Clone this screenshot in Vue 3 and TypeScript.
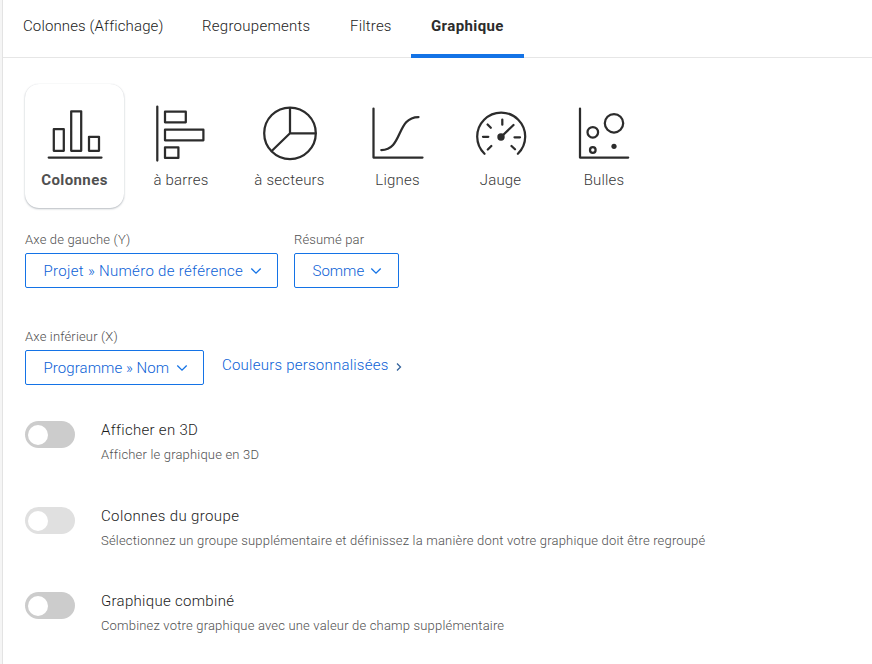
<script setup lang="ts">
import { reactive, ref } from 'vue'

interface Setting { id: string; title: string; text: string; on: boolean; disabled: boolean }

const tabs = ['Colonnes (Affichage)', 'Regroupements', 'Filtres', 'Graphique']
const tabKeys = ['tab-columns', 'tab-groups', 'tab-filters', 'tab-chart']
const activeTab = ref('Graphique')

const charts = [
  { id: 'column', label: 'Colonnes' },
  { id: 'bar', label: 'à barres' },
  { id: 'pie', label: 'à secteurs' },
  { id: 'line', label: 'Lignes' },
  { id: 'gauge', label: 'Jauge' },
  { id: 'bubble', label: 'Bulles' },
]
const activeChart = ref('column')

const settings = reactive<Setting[]>([
  { id: 'three-d', title: 'Afficher en 3D', text: 'Afficher le graphique en 3D', on: false, disabled: false },
  { id: 'grouped', title: 'Colonnes du groupe', text: 'Sélectionnez un groupe supplémentaire et définissez la manière dont votre graphique doit être regroupé', on: false, disabled: true },
  { id: 'combined', title: 'Graphique combiné', text: 'Combinez votre graphique avec une valeur de champ supplémentaire', on: false, disabled: false },
])
</script>

<template>
  <main class="panel">
    <nav class="tabs">
      <button v-for="(tab, i) in tabs" :key="tab" class="tab" :class="[tabKeys[i], { active: tab === activeTab }]" @click="activeTab = tab">{{ tab }}</button>
    </nav>

    <section class="charts">
      <button v-for="c in charts" :key="c.id" class="chart" :class="[c.id, { selected: c.id === activeChart }]" @click="activeChart = c.id">
        <svg class="icon" width="60" height="60" viewBox="0 0 60 60">
          <g v-if="c.id === 'column'">
            <path d="M3.700 54.500H56.500M8.800 26.200h10v21.600h-10zM26.200 8.300h10v39.500h-10zM44 33.800h10v14h-10z" />
          </g>
          <g v-else-if="c.id === 'bar'">
            <path d="M6.300 3.500V57.500M14 8.700h20.800v10.600H14zM14 26.700h38.400v10.600H14zM14 44.300h13.400v10.600H14z" />
          </g>
          <g v-else-if="c.id === 'pie'">
            <circle cx="30" cy="30.300" r="25.800" />
            <path d="M30 5v25.300h25.500M30 30.300L11.700 48" />
          </g>
          <g v-else-if="c.id === 'line'">
            <path d="M5.500 5.500V54.500H54.500M13.300 47C35 47 28 14 50.500 14" />
          </g>
          <g v-else-if="c.id === 'gauge'">
            <path d="M13.500 50.800A24 24 0 1 1 46.900 50.800M31.300 16.500v5.200M16.600 21.500l3.200 3.300M12 33.800h5.300M20.300 43l-3.500 3.500M43.500 34.300h5.500M40.500 43l3.500 3.300M30.500 33.500L42.500 22" />
            <circle class="solid" cx="30" cy="34" r="3.700" />
          </g>
          <g v-else>
            <path d="M6 5.500V54.500H54.200" />
            <circle cx="18.800" cy="29.300" r="5.300" />
            <circle cx="40" cy="20.300" r="9.200" />
            <circle cx="18.800" cy="47" r="2.800" />
            <circle class="solid" cx="40" cy="43.300" r="2.600" />
          </g>
        </svg>
        <span class="chart-label">{{ c.label }}</span>
      </button>
    </section>

    <section class="axis-row">
      <div class="field">
        <label>Axe de gauche (Y)</label>
        <button class="select reference">
          <span>Projet » Numéro de référence</span>
          <svg class="chevron" width="12" height="8" viewBox="0 0 12 8"><path d="M1.300 1.500L6 6.200l4.700-4.700" /></svg>
        </button>
      </div>
      <div class="field">
        <label>Résumé par</label>
        <button class="select sum">
          <span>Somme</span>
          <svg class="chevron" width="12" height="8" viewBox="0 0 12 8"><path d="M1.300 1.500L6 6.200l4.700-4.700" /></svg>
        </button>
      </div>
    </section>

    <section class="axis-row bottom-axis">
      <div class="field">
        <label>Axe inférieur (X)</label>
        <button class="select program">
          <span>Programme » Nom</span>
          <svg class="chevron" width="12" height="8" viewBox="0 0 12 8"><path d="M1.300 1.500L6 6.200l4.700-4.700" /></svg>
        </button>
      </div>
      <a class="colors">
        <span>Couleurs personnalisées</span>
        <svg class="arrow" width="6" height="10" viewBox="0 0 6 10"><path d="M1 1.500L4.500 5 1 8.500" /></svg>
      </a>
    </section>

    <section class="settings">
      <div v-for="s in settings" :key="s.id" class="setting" :class="s.id">
        <button class="toggle" :class="{ on: s.on, disabled: s.disabled }" :disabled="s.disabled" @click="s.on = !s.on"><span class="knob"></span></button>
        <div>
          <div class="setting-title">{{ s.title }}</div>
          <div class="setting-text">{{ s.text }}</div>
        </div>
      </div>
    </section>
  </main>
</template>

<style>
body { margin: 0; background: #f5f5f5; }
</style>

<style scoped>
* { box-sizing: border-box; }
button { font: inherit; color: inherit; background: none; border: 0; padding: 0; margin: 0; cursor: pointer; letter-spacing: inherit; }
.panel {
  height: 664px;
  margin-left: 2px;
  overflow: hidden;
  background: #fff;
  border-left: 1px solid #e3e3e3;
  font: 300 15px/20px Roboto, "Liberation Sans", sans-serif;
  letter-spacing: .2px;
  color: #1c1c1c;
}
.tabs { display: flex; height: 58px; border-bottom: 1px solid #e6e6e6; }
.tab { height: 58px; padding: 0 0 2px 20px; text-align: left; white-space: nowrap; border-bottom: 4px solid transparent; }
.tab-columns { width: 179px; letter-spacing: .13px; }
.tab-groups { width: 148px; letter-spacing: .27px; }
.tab-filters { width: 81px; }
.tab-chart { width: 113px; }
.tab.active { border-color: #1473e6; font-weight: 700; color: #2c2c2c; letter-spacing: .4px; }
.charts { display: grid; grid-template-columns: 100px 112px 105px 111px 95px 112px; margin: 26px 0 0 22px; height: 124px; }
.chart { display: flex; flex-direction: column; align-items: center; padding-top: 19px; border-radius: 14px; white-space: nowrap; color: #383838; }
.chart.column { width: 99px; }
.chart.selected { font-weight: 700; color: #505050; letter-spacing: .4px; box-shadow: 0 1px 2px rgba(60, 75, 90, .36), 0 0 1px rgba(60, 75, 90, .15); }
.icon { display: block; fill: none; stroke: #2c2c2c; stroke-width: 2.25; stroke-linecap: round; stroke-linejoin: round; }
.solid { fill: #2c2c2c; stroke: none; }
.chart-label { margin-top: 7px; }
.axis-row { display: flex; gap: 16px; margin: 22px 0 0 22px; }
.field label { display: block; font-size: 13px; line-height: 20px; letter-spacing: .15px; color: #505050; margin-bottom: 3px; }
.select { display: flex; align-items: center; justify-content: space-between; height: 35px; padding: 0 15px 0 17.5px; border: 1px solid #1473e6; border-radius: 2px; color: #0b61d6; white-space: nowrap; }
.select.reference { width: 253px; letter-spacing: .31px; }
.select.sum { width: 105px; padding-right: 16px; letter-spacing: 0; }
.select.program { width: 179px; letter-spacing: .08px; }
.chevron, .arrow { fill: none; stroke: #1473e6; stroke-width: 1.3; }
.arrow { stroke: #34639c; margin-top: 4px; }
.bottom-axis { margin-top: 39px; gap: 18px; }
.colors { display: flex; align-items: center; gap: 7px; height: 20px; margin-top: 28px; letter-spacing: .23px; color: #0b61d6; white-space: nowrap; }
.settings { display: flex; flex-direction: column; margin: 35px 0 0 22px; }
.setting { display: flex; gap: 26px; height: 86px; }
.setting.grouped { height: 85px; }
.toggle { flex: none; width: 50px; height: 27px; margin-top: 1px; padding: 3px 3px; border-radius: 14px; background: #ccc; }
.toggle.disabled { background: #e0e0e0; cursor: default; }
.toggle.on { background: #1473e6; }
.knob { display: block; width: 20px; height: 20px; border-radius: 50%; background: #fff; }
.toggle.on .knob { margin-left: auto; }
.setting-title { line-height: 20px; letter-spacing: .3px; }
.grouped .setting-title { letter-spacing: .37px; }
.setting-text { font-size: 13px; line-height: 20px; letter-spacing: .18px; margin-top: 5px; color: #505050; white-space: nowrap; }
</style>
